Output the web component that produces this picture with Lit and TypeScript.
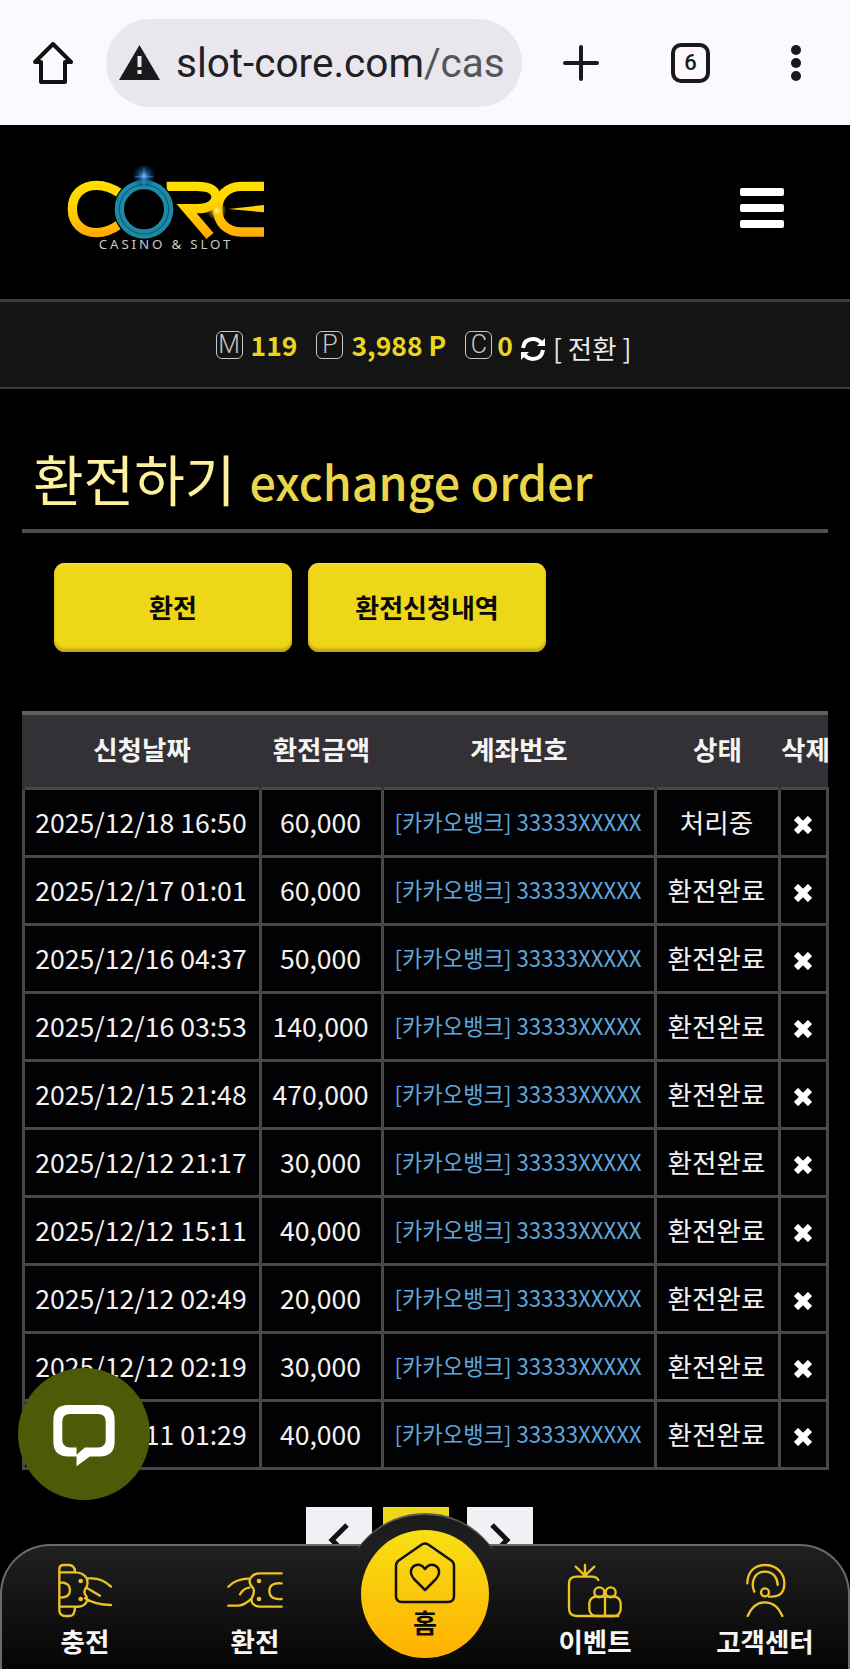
import { LitElement, html, css, svg } from "lit";
import { customElement } from "lit/decorators.js";

const rows: [string, string, string][] = [
  ["2025/12/18 16:50", "60,000", "처리중"],
  ["2025/12/17 01:01", "60,000", "환전완료"],
  ["2025/12/16 04:37", "50,000", "환전완료"],
  ["2025/12/16 03:53", "140,000", "환전완료"],
  ["2025/12/15 21:48", "470,000", "환전완료"],
  ["2025/12/12 21:17", "30,000", "환전완료"],
  ["2025/12/12 15:11", "40,000", "환전완료"],
  ["2025/12/12 02:49", "20,000", "환전완료"],
  ["2025/12/12 02:19", "30,000", "환전완료"],
  ["2025/12/11 01:29", "40,000", "환전완료"],
];

const logo = html`<svg class="logo" viewBox="0 0 750 330" width="250" height="110">
  <defs>
    <linearGradient id="lgu" gradientUnits="userSpaceOnUse" x1="0" y1="92" x2="0" y2="262">
      <stop offset="0" stop-color="#ffe000" /><stop offset=".55" stop-color="#ffcf00" /><stop offset="1" stop-color="#ffa600" />
    </linearGradient>
    <radialGradient id="gl"><stop offset="0" stop-color="#7fc4ff" /><stop offset=".4" stop-color="#1c6fb5" stop-opacity=".7" /><stop offset="1" stop-color="#0a3a70" stop-opacity="0" /></radialGradient>
    <radialGradient id="sp"><stop offset="0" stop-color="#fff6b0" /><stop offset=".4" stop-color="#ffc800" stop-opacity=".7" /><stop offset="1" stop-color="#ffb000" stop-opacity="0" /></radialGradient>
  </defs>
  <g fill="none" stroke="url(#lgu)" stroke-width="28">
    <path d="M240 130C215 113 190 106 170 106C125 106 97 135 97 177C97 218 125 248 170 248C190 248 215 240 240 222" />
    <path d="M380 109H470C515 109 528 125 528 142C528 160 510 176 470 176H440L510 258" />
    <path d="M672 109H605C560 109 533 140 533 178C533 218 560 246 605 246H672" />
  </g>
  <polygon points="672,165 672,187 565,177" fill="url(#lgu)" />
  <circle cx="312" cy="178" r="92" fill="#000" />
  <circle cx="312" cy="178" r="74" fill="none" stroke="#1a8aa6" stroke-width="28" />
  <circle cx="312" cy="178" r="74" fill="none" stroke="#07303c" stroke-width="2" />
  <circle cx="312" cy="78" r="36" fill="url(#gl)" />
  <path d="M312 50V110M285 80H340" stroke="#6cb8ff" stroke-width="2" opacity=".7" />
  <circle cx="530" cy="182" r="30" fill="url(#sp)" />
  <text x="378" y="297" text-anchor="middle" class="logotext">CASINO &amp; SLOT</text>
</svg>`;

const navIcon1 = svg`<path d="M28 165V42Q28 30 42 30H56Q75 30 75 52M28 52H75Q100 52 110 70H128Q160 72 183 95M28 155V165Q28 183 46 183H58Q75 183 75 155H28M75 155Q105 158 112 135Q112 125 105 118Q100 108 110 95Q115 85 110 70M105 130Q135 150 183 150M112 100L150 122M30 82Q60 82 60 105Q60 128 30 128" /><circle cx="92" cy="78" r="7" class="dot" /><circle cx="92" cy="132" r="7" class="dot" />`;
const navIcon2 = svg`<path d="M185 55H118Q100 55 90 72Q85 85 100 100Q105 112 95 130Q92 152 118 155H185M25 95Q45 72 90 70M25 152H55Q75 150 95 130M60 118Q70 100 88 98M185 85Q148 82 148 108Q148 135 185 132" /><circle cx="117" cy="78" r="7" class="dot" /><circle cx="117" cy="132" r="7" class="dot" />`;
const navIcon3 = svg`<path d="M115 75Q110 65 95 65H50Q27 65 27 85V160Q27 183 50 183H175M75 62V30M75 62L47 35M75 62L103 35" /><rect x="88" y="125" width="94" height="58" rx="20" /><path d="M135 125V183" /><circle cx="118" cy="112" r="15" /><circle cx="152" cy="112" r="15" />`;
const navIcon4 = svg`<path d="M52 85C52 50 75 30 105 30C140 30 163 55 163 85C163 110 150 125 125 125H117M73 110C60 80 75 50 105 50C130 50 143 70 143 90M53 183C65 155 85 142 105 142C125 142 145 155 157 183" /><circle cx="105" cy="112" r="12" />`;

@customElement("app-root")
export class AppRoot extends LitElement {
  static styles = css`
    :host { display: block; position: relative; width: 850px; height: 1669px; overflow: hidden; background: #000; color: #fff; font-family: "Noto Sans CJK KR", "Noto Sans", sans-serif; }
    * { box-sizing: border-box; }
    .chrome { height: 125px; background: #fbf9fd; display: flex; align-items: center; padding-left: 33px; color: #1a1a1c; }
    .pill { width: 416px; height: 88px; margin-left: 33px; border-radius: 44px; background: #e9e7ed; display: flex; align-items: center; padding-left: 13px; overflow: hidden; }
    .url { margin-left: 16px; font: 400 40.500px Roboto, sans-serif; white-space: nowrap; color: #202124; }
    .url span { color: #55565a; }
    .plus { margin-left: 41px; }
    .tabbox { width: 39px; height: 40px; border: 4px solid #1a1a1c; border-radius: 10px; display: flex; align-items: center; justify-content: center; font: 500 22px Roboto, sans-serif; margin-left: 72px; }
    .dots { margin-left: 80px; }
    .head { height: 174px; display: flex; align-items: flex-start; justify-content: space-between; padding: 25px 66px 0 40px; }
    .logo { display: block; }
    .logotext { font: 400 40px "Noto Sans", sans-serif; fill: #c9c9c9; letter-spacing: 8.500px; }
    .burger { display: flex; flex-direction: column; gap: 8px; margin-top: 38px; }
    .burger i { display: block; width: 44px; height: 8px; background: #fff; border-radius: 2px; }
    .status { height: 90px; background: #141414; border-top: 3px solid #3c3c3e; border-bottom: 2px solid #3c3c3e; display: flex; align-items: center; justify-content: center; font-size: 26.500px; padding-right: 3px; }
    .mark { width: 27px; height: 28px; border: 1.500px solid #c8c8c8; border-radius: 6px; display: flex; align-items: center; justify-content: center; font: 300 25px Roboto, sans-serif; color: #c8c8c8; margin-right: 8px; }
    .mark.tight { margin-right: 5px; }
    .val { font-weight: 700; color: #e8d421; line-height: 30px; margin-right: 19px; white-space: nowrap; }
    .val.last { margin-right: 7px; }
    .swap { margin-left: 7px; color: #e8e8e8; white-space: nowrap; margin-top: 6px; }
    .refresh { margin-top: 8px; }
    h1 { margin: 0 22px; height: 144px; padding: 46px 0 0 11px; border-bottom: 4px solid #4f4d50; display: flex; align-items: baseline; font-weight: 400; white-space: nowrap; }
    .ko { font-size: 55px; line-height: 84px; color: #fdf1a0; }
    .en { font-size: 46.600px; font-weight: 500; color: #e9d64c; margin-left: 14px; }
    .btns { display: flex; gap: 16px; padding: 30px 0 0 54px; height: 178px; }
    .btn { width: 238px; height: 89px; border-radius: 11px; background: #eed718; color: #0a0a0a; font-weight: 700; font-size: 26px; display: flex; align-items: center; justify-content: center; box-shadow: inset 0 -3px 3px #b9a310, inset 0 1px 2px #f7e65a; padding-bottom: 2px; }
    table { margin-left: 22px; width: 804px; border-collapse: collapse; table-layout: fixed; }
    .c1 { width: 237px; } .c2 { width: 122px; } .c3 { width: 273px; } .c4 { width: 124px; } .c5 { width: 48px; }
    th { height: 75px; background: #333135; border-top: 4px solid #605e62; border-left: 3px solid #333135; border-right: 3px solid #333135; font-size: 26.500px; font-weight: 700; color: #f4f4f4; padding: 0 0 4px; white-space: nowrap; overflow: visible; }
    th:last-child { border-right-width: 1px; padding-right: 6px; }
    td { height: 68px; border: 3px solid #484848; background: #020103; text-align: center; font-size: 26.600px; padding: 0 2px 2px 0; white-space: nowrap; color: #f2f2f2; }
    td.acct { color: #5ea6dc; font-size: 22.200px; }
    td.del svg { display: block; margin: 8px auto 0; }
    .pager { display: flex; gap: 11px; position: absolute; left: 306px; top: 1507px; }
    .pager div { width: 66px; height: 66px; background: #f1f0f4; display: flex; align-items: center; justify-content: center; font-size: 24px; color: #111; }
    .pager div.on { background: #eed718; }
    .pager div.next { margin-left: 7px; }
    .chat { position: absolute; left: 18px; top: 1368px; width: 132px; height: 132px; border-radius: 50%; background: #4d5a08; display: flex; align-items: center; justify-content: center; }
    .chat svg { margin-top: 5px; }
    .nav { position: absolute; left: 0; right: 0; bottom: 0; height: 125px; border: 2px solid #6b6a66; border-bottom: 0; border-radius: 50px 50px 0 0; background: linear-gradient(#202020, #050505); display: grid; grid-template-columns: repeat(5, 170px); }
    .item { display: flex; flex-direction: column; align-items: center; margin-left: -4px; padding-top: 9px; font-size: 26.500px; font-weight: 700; color: #f6f6f6; }
    .item svg { display: block; fill: none; stroke: #ecc225; stroke-width: 7; stroke-linecap: round; stroke-linejoin: round; }
    .item svg .dot { fill: #ecc225; stroke: none; }
    .item span { line-height: 36px; margin-top: -2px; white-space: nowrap; }
    .halo { position: absolute; left: 341px; top: -33px; width: 164px; height: 164px; border-radius: 50%; background: linear-gradient(#1a1a1a, #202020 22%); border-top: 2px solid #5a5a58; clip-path: inset(0 0 128px 0); }
    .homebtn { position: absolute; left: 359px; top: -16px; width: 128px; height: 128px; border-radius: 50%; background: linear-gradient(#f6e014, #ffb000); color: #0a0a0a; display: flex; flex-direction: column; align-items: center; font-weight: 700; font-size: 26px; padding-top: 12px; }
    .homebtn span { line-height: 30px; margin-top: 3px; }
  `;

  render() {
    return html`
      <div class="chrome">
        <svg width="40" height="42" viewBox="0 0 40 42" fill="none" stroke="#111" stroke-width="4" stroke-linejoin="round"><path d="M20 2L38 20H32V40H8V20H2Z" /></svg>
        <div class="pill">
          <svg width="41" height="35" viewBox="0 0 41 35"><path d="M20.500 0L41 35H0Z" fill="#1a1a1c" /><rect x="18.500" y="11" width="4" height="11" fill="#e9e7ed" /><rect x="18.500" y="25" width="4" height="4" fill="#e9e7ed" /></svg>
          <div class="url">slot-core.com<span>/cas</span></div>
        </div>
        <svg class="plus" width="36" height="36" viewBox="0 0 36 36" stroke="#1a1a1c" stroke-width="4" stroke-linecap="round"><path d="M18 2V34M2 18H34" /></svg>
        <div class="tabbox">6</div>
        <svg class="dots" width="12" height="38" viewBox="0 0 12 38" fill="#1a1a1c"><circle cx="6" cy="6" r="5" /><circle cx="6" cy="19" r="5" /><circle cx="6" cy="32" r="5" /></svg>
      </div>
      <div class="head">
        ${logo}
        <div class="burger"><i></i><i></i><i></i></div>
      </div>
      <div class="status">
        <div class="mark">M</div><div class="val">119</div>
        <div class="mark">P</div><div class="val">3,988 P</div>
        <div class="mark tight">C</div><div class="val last">0</div>
        <svg class="refresh" width="26" height="24" viewBox="0 0 26 24" fill="none" stroke="#fff" stroke-width="4"><path d="M3 11C4 5 8 2 13 2C17 2 20 4 22 7" /><path d="M23 13C22 19 18 22 13 22C9 22 6 20 4 17" /><path d="M25 1V9H17Z" fill="#fff" stroke="none" /><path d="M1 23V15H9Z" fill="#fff" stroke="none" /></svg>
        <div class="swap">[ 전환 ]</div>
      </div>
      <h1><span class="ko">환전하기</span><span class="en">exchange order</span></h1>
      <div class="btns"><div class="btn">환전</div><div class="btn">환전신청내역</div></div>
      <table>
        <colgroup><col class="c1" /><col class="c2" /><col class="c3" /><col class="c4" /><col class="c5" /></colgroup>
        <thead><tr><th>신청날짜</th><th>환전금액</th><th>계좌번호</th><th>상태</th><th>삭제</th></tr></thead>
        <tbody>
          ${rows.map(
            (r) => html`<tr>
              <td>${r[0]}</td><td>${r[1]}</td><td class="acct">[카카오뱅크] 33333XXXXX</td><td>${r[2]}</td>
              <td class="del"><svg width="18" height="18" viewBox="0 0 18 18" stroke="#fff" stroke-width="6"><path d="M2 2L16 16M16 2L2 16" /></svg></td>
            </tr>`
          )}
        </tbody>
      </table>
      <div class="pager">
        <div><svg width="24" height="36" viewBox="0 0 24 36" fill="none" stroke="#111" stroke-width="5"><path d="M20 3L5 18L20 33" /></svg></div>
        <div class="on">1</div>
        <div class="next"><svg width="24" height="36" viewBox="0 0 24 36" fill="none" stroke="#111" stroke-width="5"><path d="M4 3L19 18L4 33" /></svg></div>
      </div>
      <div class="chat">
        <svg width="62" height="63" viewBox="0 0 185 190"><path fill="#fff" fill-rule="evenodd" d="M45 0H140Q185 0 185 45V110Q185 155 140 155H110L70 185V155H45Q0 155 0 110V45Q0 0 45 0ZM50 27Q27 27 27 50V105Q27 128 50 128H70V150L95 128H135Q158 128 158 105V50Q158 27 135 27Z" /></svg>
      </div>
      <div class="nav">
        <div class="item"><svg width="70" height="70" viewBox="0 0 210 210">${navIcon1}</svg><span>충전</span></div>
        <div class="item"><svg width="70" height="70" viewBox="0 0 210 210">${navIcon2}</svg><span>환전</span></div>
        <div></div>
        <div class="item"><svg width="70" height="70" viewBox="0 0 210 210">${navIcon3}</svg><span>이벤트</span></div>
        <div class="item"><svg width="70" height="70" viewBox="0 0 210 210">${navIcon4}</svg><span>고객센터</span></div>
        <div class="halo"></div>
        <div class="homebtn">
          <svg width="62" height="62" viewBox="0 0 62 62" fill="none" stroke="#111" stroke-width="2.500" stroke-linejoin="round"><path d="M27 3Q31 0 35 3L58 19Q60 21 60 24V54Q60 60 54 60H8Q2 60 2 54V24Q2 21 4 19Z" /><path d="M31 48L20 37Q15 31 18 26Q21 22 26 23Q29 24 31 27Q33 24 36 23Q41 22 44 26Q47 31 42 37Z" /></svg>
          <span>홈</span>
        </div>
      </div>
    `;
  }
}
